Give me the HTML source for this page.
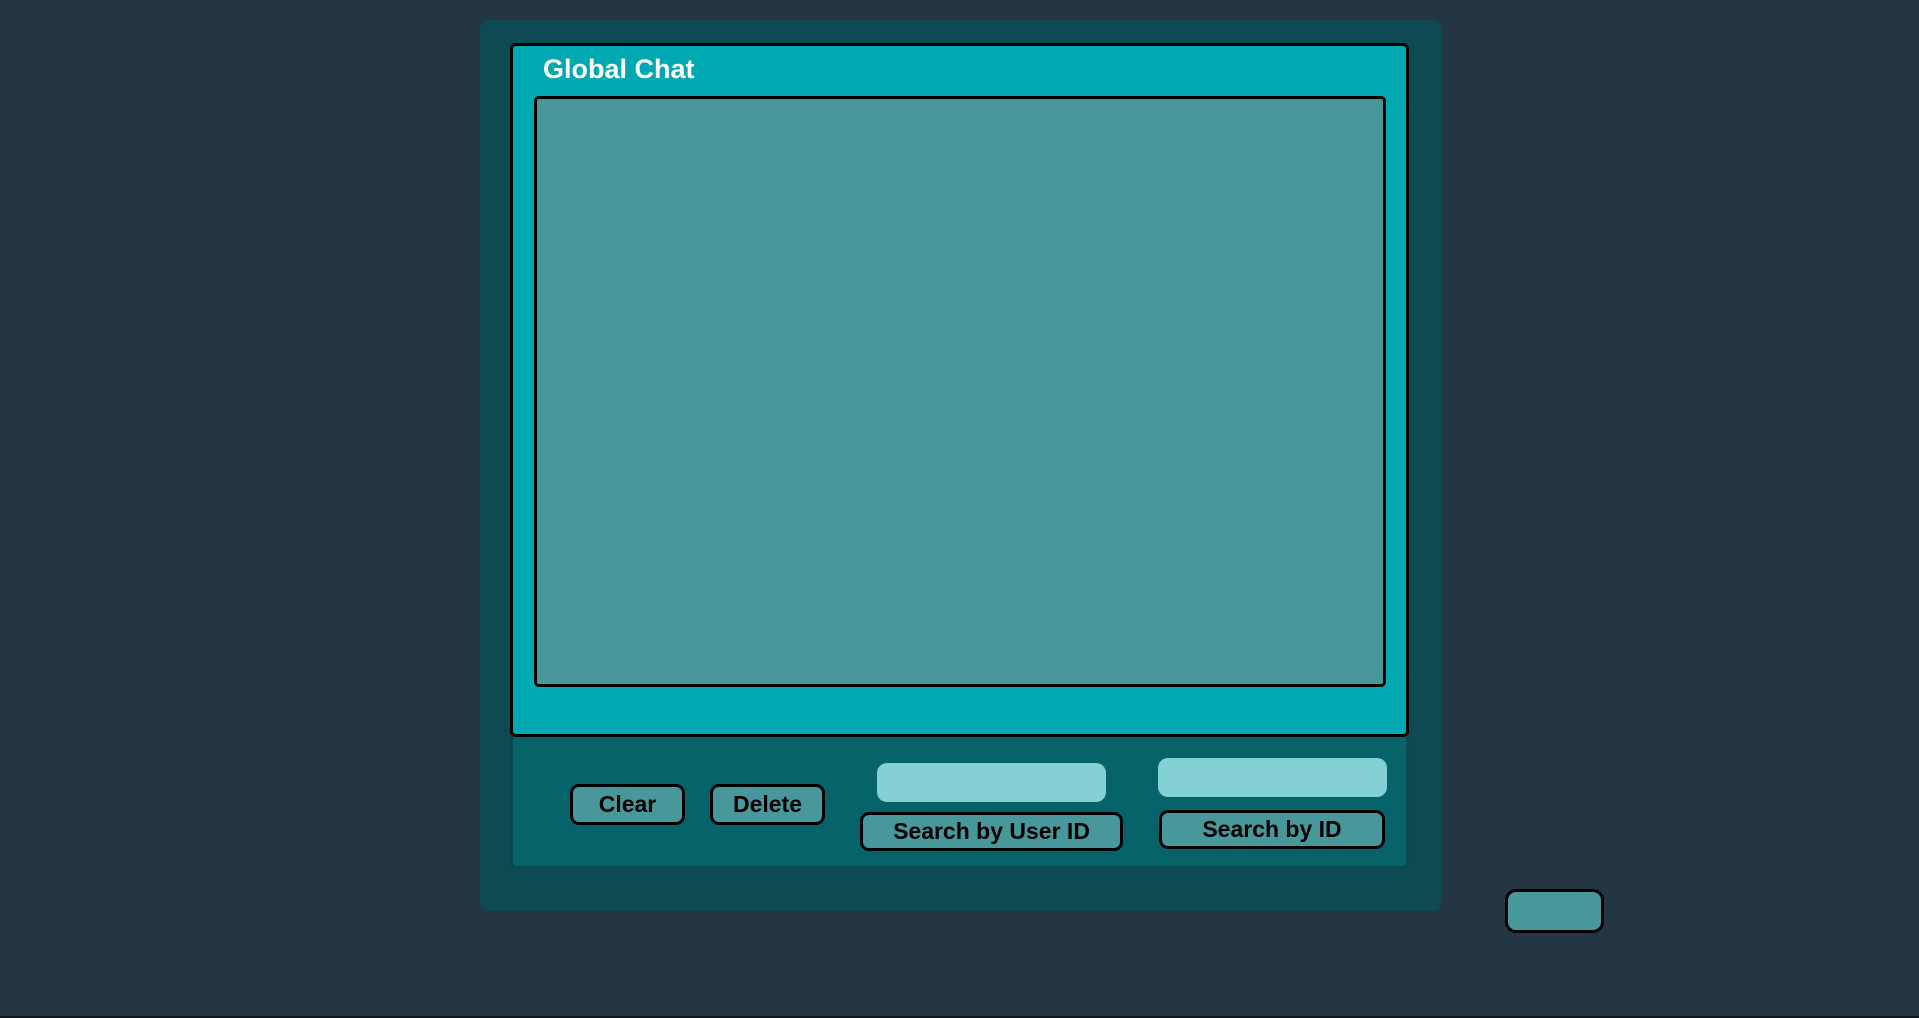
<!DOCTYPE html>
<html><head><meta charset="utf-8"><style>
html,body{margin:0;padding:0;width:1919px;height:1018px;overflow:hidden;background:#243544;font-family:"Liberation Sans",sans-serif;}
.abs{position:absolute;box-sizing:border-box;}
.outer{left:480px;top:20px;width:961px;height:891px;background:#0e4a52;border-radius:8px;}
.bar{left:510px;top:720px;width:899px;height:149px;background:#07636a;border:3px solid #0a4850;border-top:none;border-radius:0 0 6px 6px;}
.inner{left:510px;top:43px;width:899px;height:694px;background:#00a9b1;border:3px solid #000;border-radius:6px;}
.title{left:543px;top:54px;color:#fff;font-weight:bold;font-size:27px;}
.chat{left:534px;top:96px;width:852px;height:591px;background:#48979b;border:3px solid #000;border-radius:5px;}
.btn{background:#48979b;border:3px solid #000;border-radius:9px;color:#000;font-weight:bold;font-size:23px;display:flex;align-items:center;justify-content:center;}
.inp{background:#83d1d5;border-radius:10px;}
.bottomline{left:0;top:1016px;width:1919px;height:2px;background:#10181f;}
</style></head><body>
<div class="abs outer"></div>
<div class="abs bar"></div>
<div class="abs inner"></div>
<div class="abs title">Global Chat</div>
<div class="abs chat"></div>
<div class="abs btn" style="left:570px;top:784px;width:115px;height:41px;">Clear</div>
<div class="abs btn" style="left:710px;top:784px;width:115px;height:41px;">Delete</div>
<div class="abs inp" style="left:877px;top:763px;width:229px;height:39px;"></div>
<div class="abs btn" style="left:860px;top:812px;width:263px;height:39px;">Search by User ID</div>
<div class="abs inp" style="left:1158px;top:758px;width:229px;height:39px;"></div>
<div class="abs btn" style="left:1159px;top:810px;width:226px;height:39px;">Search by ID</div>
<div class="abs btn" style="left:1505px;top:889px;width:99px;height:44px;border-radius:11px;"></div>
<div class="abs bottomline"></div>
</body></html>
